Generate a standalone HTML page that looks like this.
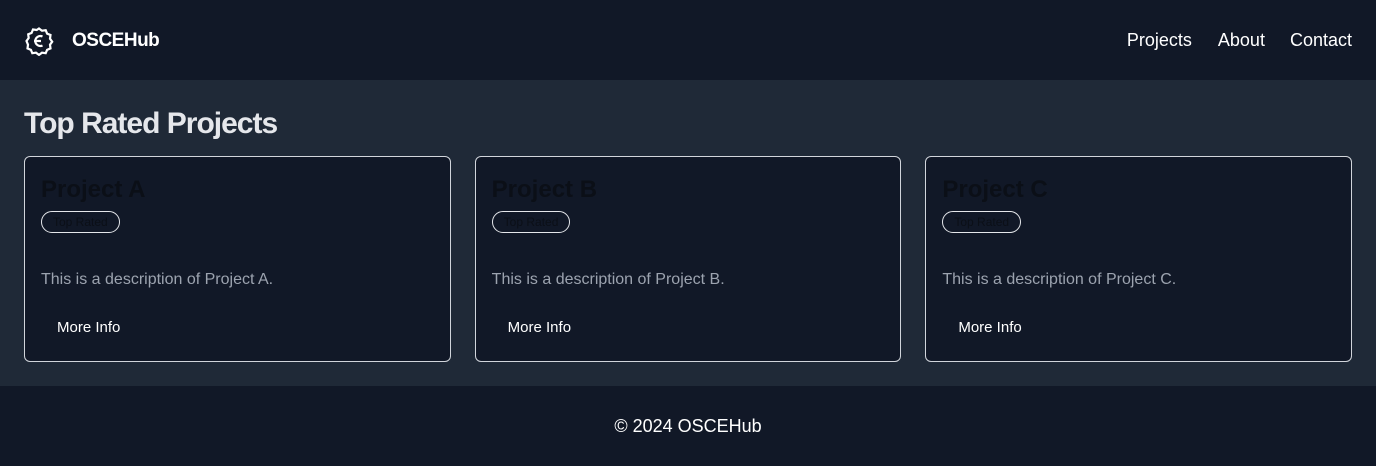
<!DOCTYPE html>
<html><head><style>
*{margin:0;padding:0;box-sizing:border-box}
body{width:1376px;height:466px;background:#1e293b;font-family:"Liberation Sans",sans-serif;overflow:hidden}
header{height:80px;background:#111827;display:flex;align-items:center;padding:0 24px;justify-content:space-between}
.logo{display:flex;align-items:center;gap:18px;color:#fff;font-weight:bold;font-size:19px;letter-spacing:-0.5px;padding-top:2px}
nav a{color:#fff;font-size:18px;margin-left:26px;text-decoration:none}
nav a:last-child{margin-left:25px}
main{height:306px;background:#1f2937;padding:26px 24px 24px}
h1{color:#e5e7eb;font-size:30px;letter-spacing:-1px;line-height:36px;margin-bottom:14px}
.grid{display:flex;gap:24px}
.card{flex:1;height:206px;background:#111827;border:1px solid #d1d5db;border-radius:6px;padding:18px 16px 16px}
.card h2{color:#0b0f17;font-size:24px;line-height:30px}
.badge{display:inline-block;border:1px solid #e5e7eb;border-radius:12px;font-size:12px;color:#0b0f17;padding:3px 11px;margin-top:6px}
.card p{color:#9ca3af;font-size:16px;margin-top:38px}
.btn{color:#fff;font-size:15px;margin:30px 0 0 16px}
footer{height:80px;background:#111827;color:#fff;font-size:18px;text-align:center;line-height:80px}
</style></head><body>
<header><div class="logo"><svg width="30" height="30" viewBox="0 0 30 30" fill="none" stroke="#fff" stroke-width="2.2"><path d="M15 2.5l3 2.2 3.7-.5 1.4 3.4 3.4 1.4-.5 3.7 2.2 3-2.2 3 .5 3.7-3.4 1.4-1.4 3.4-3.7-.5-3 2.2-3-2.2-3.7.5-1.4-3.4-3.4-1.4.5-3.7L2.5 15l2.2-3-.5-3.7 3.4-1.4 1.4-3.4 3.7.5z"/><path d="M18.5 10.5a5 5 0 1 0 0 9M10 15h7"/></svg>OSCEHub</div>
<nav><a>Projects</a><a>About</a><a>Contact</a></nav></header>
<main><h1>Top Rated Projects</h1><div class="grid">
<div class="card"><h2>Project A</h2><span class="badge">Top Rated</span><p>This is a description of Project A.</p><div class="btn">More Info</div></div>
<div class="card"><h2>Project B</h2><span class="badge">Top Rated</span><p>This is a description of Project B.</p><div class="btn">More Info</div></div>
<div class="card"><h2>Project C</h2><span class="badge">Top Rated</span><p>This is a description of Project C.</p><div class="btn">More Info</div></div>
</div></main>
<footer>© 2024 OSCEHub</footer>
</body></html>
